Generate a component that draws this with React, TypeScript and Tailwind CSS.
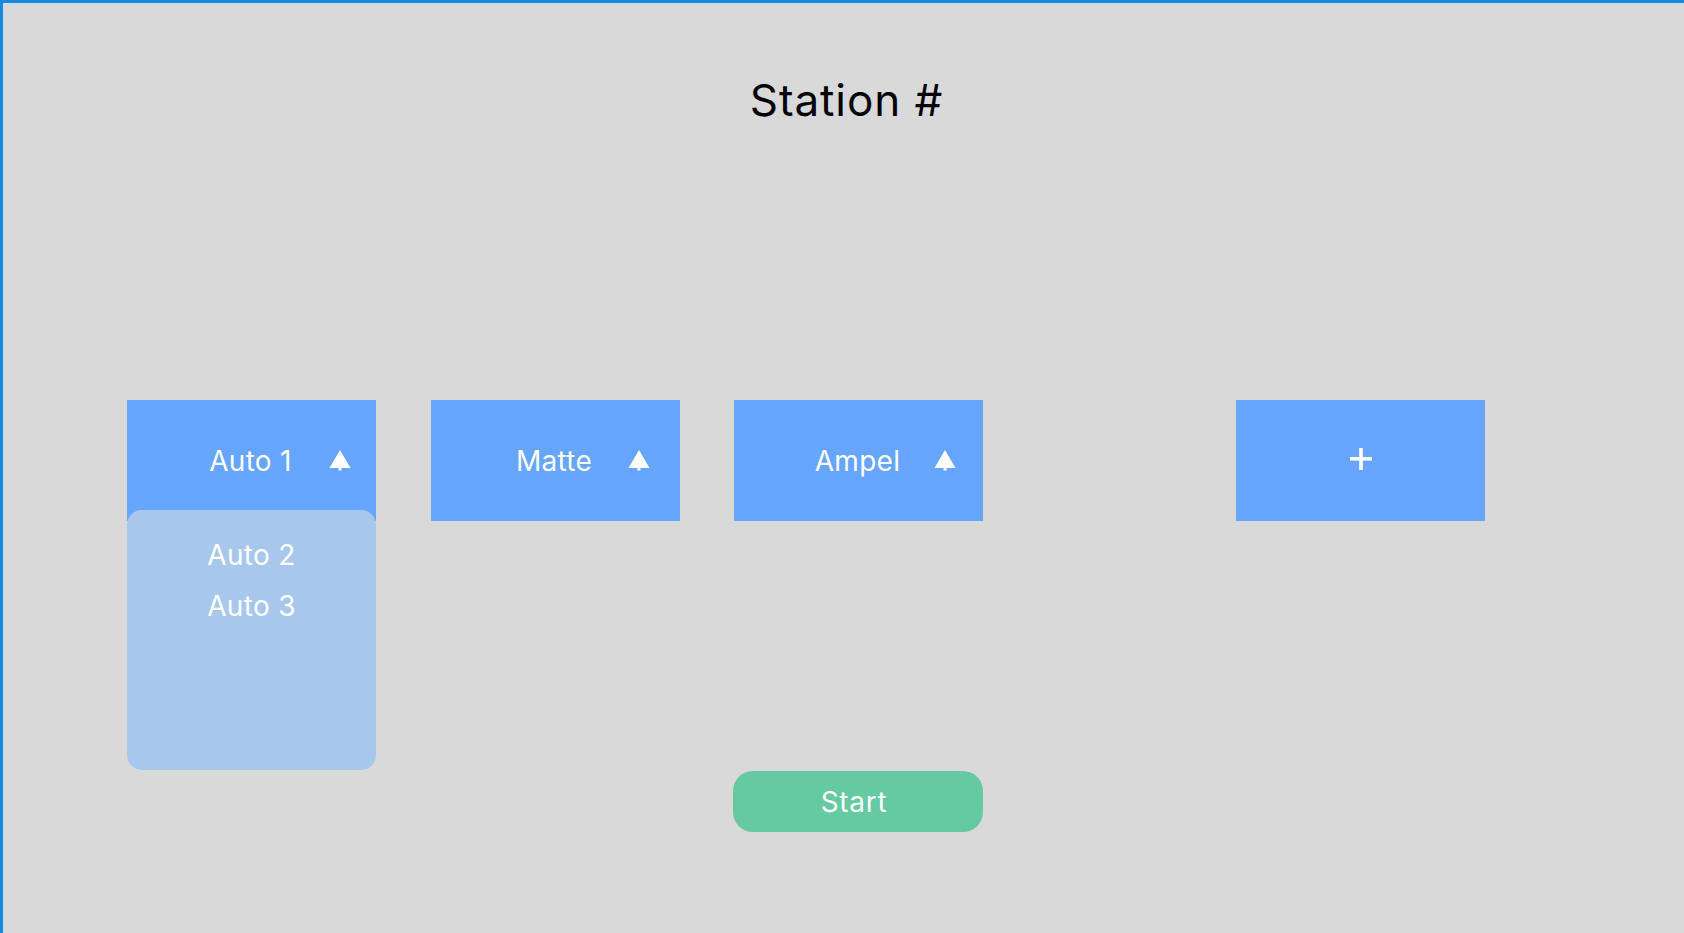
import React from "react";

function Arrow() {
  return (
    <svg width="22" height="21" viewBox="0 0 22 21" className="block">
      <polygon points="11,0 21.5,18 0.5,18" fill="#ffffff" />
      <rect x="9.5" y="17" width="3" height="3.5" fill="#ffffff" />
    </svg>
  );
}

function Box({
  label,
  arrowClass,
  children,
}: {
  label: string;
  arrowClass: string;
  children?: React.ReactNode;
}) {
  return (
    <div className="relative h-[121px] w-[249px]">
      <div className="relative flex h-full w-full items-center justify-center bg-[#67a6fe]">
        <span className="-translate-x-[1px] text-[28px] leading-[34px] tracking-[0.3px] text-white">{label}</span>
        <div className={arrowClass}>
          <Arrow />
        </div>
      </div>
      {children}
    </div>
  );
}

export default function App() {
  return (
    <div
      className="h-[933px] w-[1684px] overflow-hidden border-l-[3px] border-t-[3px] border-[#108be9] bg-[#d9d9d9]"
      style={{ fontFamily: "Inter, 'Noto Sans', sans-serif" }}
    >
      <div className="flex flex-col">
        <h1 className="mt-[71px] translate-x-[3px] text-center text-[44px] leading-[53px] font-normal tracking-[0.9px] text-black">
          Station #
        </h1>
        <div className="ml-[124px] mt-[273px] grid grid-cols-[249px_249px_249px_144px_249px] gap-x-[54.5px]">
          <Box label="Auto 1" arrowClass="absolute right-[25px] top-[50px]">
            <div className="absolute left-0 top-[110px] z-10 h-[260px] w-[249px] rounded-[15px] bg-[#a8c7ed] pt-[20px]">
              <div className="text-center text-[28px] leading-[51px] tracking-[0.3px] text-white">Auto 2</div>
              <div className="text-center text-[28px] leading-[51px] tracking-[0.3px] text-white">Auto 3</div>
            </div>
          </Box>
          <Box label="Matte" arrowClass="absolute right-[30px] top-[50px]" />
          <Box label="Ampel" arrowClass="absolute right-[27px] top-[50px]" />
          <div />
          <div className="flex h-[121px] w-[249px] items-center justify-center bg-[#67a6fe]">
            <svg width="22" height="22" viewBox="0 0 22 22" className="block -translate-y-[2px]">
              <rect x="0" y="9" width="22" height="3.6" fill="#ffffff" />
              <rect x="9.2" y="0" width="3.6" height="22" fill="#ffffff" />
            </svg>
          </div>
          <div className="col-start-3 mt-[250px]">
            <button className="flex h-[61px] w-[250px] -translate-x-[1px] items-center justify-center rounded-[20px] bg-[#66caa0] text-[28px] leading-[34px] text-white">
              <span className="-translate-x-[4px] tracking-[0.7px]">Start</span>
            </button>
          </div>
        </div>
      </div>
    </div>
  );
}
